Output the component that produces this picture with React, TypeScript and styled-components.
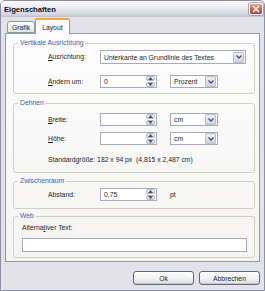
import styled, { createGlobalStyle } from "styled-components";

const GlobalStyle = createGlobalStyle`
  html, body {
    margin: 0;
    padding: 0;
  }
  body {
    font-family: "Liberation Sans", Arial, sans-serif;
    font-size: 6.8px;
    color: #1e1e1e;
    background: #fff;
  }
  * {
    box-sizing: border-box;
  }
`;

const Window = styled.div`
  width: 265px;
  height: 291px;
  display: flex;
  flex-direction: column;
  background: #e3e2e9;
  border: 1px solid #8d8ea3;
  border-radius: 5px 5px 0 0;
  overflow: hidden;
`;

const TitleBar = styled.div`
  height: 16px;
  flex: none;
  display: flex;
  align-items: center;
  justify-content: space-between;
  padding: 0 1px 0 3px;
  background: linear-gradient(#fdfdfe, #ebebf1 40%, #d4d4df 85%, #bdbdcc);
  font-weight: bold;
  font-size: 7.6px;
  color: #111;
`;

const CloseButton = styled.div`
  width: 14px;
  height: 12px;
  display: flex;
  align-items: center;
  justify-content: center;
  border: 1px solid #fff;
  border-radius: 2px;
  background: linear-gradient(#eaa391, #d06650 50%, #b9432e);
  box-shadow: 0 0 0 1px #a4a4b8;
`;

const Content = styled.div`
  flex: 1;
  display: flex;
  flex-direction: column;
  padding: 0 4px;
`;

const TabStrip = styled.div`
  height: 16px;
  display: flex;
  align-items: flex-end;
  padding-left: 2px;
`;

const Tab = styled.div<{ $active?: boolean }>`
  position: relative;
  z-index: ${(p) => (p.$active ? 1 : 0)};
  height: ${(p) => (p.$active ? 16 : 12)}px;
  margin-bottom: ${(p) => (p.$active ? -1 : 0)}px;
  padding: 0 ${(p) => (p.$active ? 6 : 4)}px;
  display: flex;
  align-items: center;
  border: 1px solid #919b9c;
  border-bottom: ${(p) => (p.$active ? "none" : "1px solid #919b9c")};
  border-top: ${(p) => (p.$active ? "2px solid #f0a53a" : "1px solid #919b9c")};
  border-radius: 3px 3px 0 0;
  background: ${(p) =>
    p.$active ? "#fcfcfe" : "linear-gradient(#ffffff, #f0f0ee 60%, #e3e3e6)"};
`;

const Panel = styled.div`
  height: 229px;
  border: 1px solid #919b9c;
  background: linear-gradient(#fcfcfe, #f5f4f1);
  padding: 5px 4px 0 7px;
`;

const Group = styled.fieldset<{ $mt?: number }>`
  margin: ${(p) => p.$mt ?? 0}px 0 0;
  padding: 0;
  min-width: 0;
  border: 1px solid #d0d0bf;
  border-radius: 3px;
`;

const Legend = styled.legend`
  margin-left: 4px;
  padding: 0 2px;
  line-height: 8px;
  color: #3d63b2;
`;

const GroupBody = styled.div<{ $pt: number; $pb: number; $pl?: number; $gap?: number }>`
  display: flex;
  flex-direction: column;
  gap: ${(p) => p.$gap ?? 0}px;
  padding: ${(p) => p.$pt}px 6px ${(p) => p.$pb}px ${(p) => p.$pl ?? 34}px;
`;

const Row = styled.div`
  display: grid;
  grid-template-columns: 52px auto;
  align-items: center;
`;

const Controls = styled.div`
  display: flex;
  align-items: center;
  gap: 13px;
`;

const Label = styled.span`
  line-height: 8px;
  white-space: nowrap;
`;

const Key = styled.span`
  text-decoration: underline;
`;

const Note = styled.div<{ $mt?: number }>`
  margin-top: ${(p) => p.$mt ?? 0}px;
  line-height: 8px;
  white-space: nowrap;
`;

const Field = styled.div<{ $w: number; $h?: number }>`
  width: ${(p) => p.$w}px;
  height: ${(p) => p.$h ?? 13}px;
  display: flex;
  align-items: center;
  justify-content: space-between;
  border: 1px solid #a5acb5;
  background: #fff;
  padding-left: 3px;
  padding-right: 1px;
`;

const SpinBox = styled.div`
  width: 9px;
  height: 11px;
  display: flex;
  flex-direction: column;
  gap: 1px;
`;

const SpinButton = styled.div`
  flex: 1;
  display: flex;
  align-items: center;
  justify-content: center;
  border: 1px solid #b3b8c6;
  border-radius: 2px;
  background: linear-gradient(#f4f5f8, #d9dce6);
`;

const ArrowBox = styled.div`
  width: 11px;
  height: 11px;
  display: flex;
  align-items: center;
  justify-content: center;
  border: 1px solid #b9bdcc;
  border-radius: 1px;
  background: linear-gradient(#eef0f5, #cfd3df);
`;

const ButtonBar = styled.div`
  display: flex;
  justify-content: flex-end;
  gap: 5px;
  margin-top: 9px;
`;

const Button = styled.div`
  width: 61px;
  height: 14px;
  display: flex;
  align-items: center;
  justify-content: center;
  border: 1px solid #5c667c;
  border-radius: 3px;
  background: linear-gradient(#ffffff, #f1f1f4 55%, #dadae2);
  box-shadow: inset 0 -1px 0 #c8c8d2;
`;

function Spinner() {
  return (
    <SpinBox>
      <SpinButton>
        <svg width="5" height="3" viewBox="0 0 5 3">
          <path d="M0 3 L2.5 0 L5 3 Z" fill="#4a5670" />
        </svg>
      </SpinButton>
      <SpinButton>
        <svg width="5" height="3" viewBox="0 0 5 3">
          <path d="M0 0 L2.5 3 L5 0 Z" fill="#4a5670" />
        </svg>
      </SpinButton>
    </SpinBox>
  );
}

function NumberField({ value, width }: { value?: string; width: number }) {
  return (
    <Field $w={width}>
      <span>{value}</span>
      <Spinner />
    </Field>
  );
}

function Dropdown({ value, width, height }: { value: string; width: number; height?: number }) {
  return (
    <Field $w={width} $h={height}>
      <span>{value}</span>
      <ArrowBox>
        <svg width="6" height="4" viewBox="0 0 6 4">
          <path d="M0.5 0.5 L3 3 L5.5 0.5" fill="none" stroke="#3e5075" strokeWidth="1.3" />
        </svg>
      </ArrowBox>
    </Field>
  );
}

export default function App() {
  return (
    <>
      <GlobalStyle />
      <Window>
        <TitleBar>
          <span>Eigenschaften</span>
          <CloseButton>
            <svg width="8" height="8" viewBox="0 0 8 8">
              <path d="M1 1 L7 7 M7 1 L1 7" stroke="#fff" strokeWidth="1.5" />
            </svg>
          </CloseButton>
        </TitleBar>
        <Content>
          <TabStrip>
            <Tab>Grafik</Tab>
            <Tab $active>Layout</Tab>
          </TabStrip>
          <Panel>
            <Group>
              <Legend>Vertikale Ausrichtung</Legend>
              <GroupBody $pt={3} $pb={5} $gap={11}>
                <Row>
                  <Label>
                    <Key>A</Key>usrichtung:
                  </Label>
                  <Dropdown value="Unterkante an Grundlinie des Textes" width={146} height={14} />
                </Row>
                <Row>
                  <Label>
                    <Key>Ä</Key>ndern um:
                  </Label>
                  <Controls>
                    <NumberField value="0" width={57} />
                    <Dropdown value="Prozent" width={48} />
                  </Controls>
                </Row>
              </GroupBody>
            </Group>

            <Group $mt={5}>
              <Legend>Dehnen</Legend>
              <GroupBody $pt={6} $pb={8} $gap={6}>
                <Row>
                  <Label>
                    <Key>B</Key>reite:
                  </Label>
                  <Controls>
                    <NumberField width={57} />
                    <Dropdown value="cm" width={48} />
                  </Controls>
                </Row>
                <Row>
                  <Label>
                    <Key>H</Key>öhe:
                  </Label>
                  <Controls>
                    <NumberField width={57} />
                    <Dropdown value="cm" width={48} />
                  </Controls>
                </Row>
                <Note $mt={5}>Standardgröße: 182 x 94 px&nbsp; (4,815 x 2,487 cm)</Note>
              </GroupBody>
            </Group>

            <Group $mt={4}>
              <Legend>Zwischenraum</Legend>
              <GroupBody $pt={3} $pb={7}>
                <Row>
                  <Label>Abstand:</Label>
                  <Controls>
                    <NumberField value="0,75" width={57} />
                    <Label>pt</Label>
                  </Controls>
                </Row>
              </GroupBody>
            </Group>

            <Group $mt={3}>
              <Legend>Web</Legend>
              <GroupBody $pt={4} $pb={5} $pl={8} $gap={6}>
                <Label>
                  Alterna<Key>t</Key>iver Text:
                </Label>
                <Field $w={225} $h={14} />
              </GroupBody>
            </Group>
          </Panel>
          <ButtonBar>
            <Button>Ok</Button>
            <Button>Abbrechen</Button>
          </ButtonBar>
        </Content>
      </Window>
    </>
  );
}
